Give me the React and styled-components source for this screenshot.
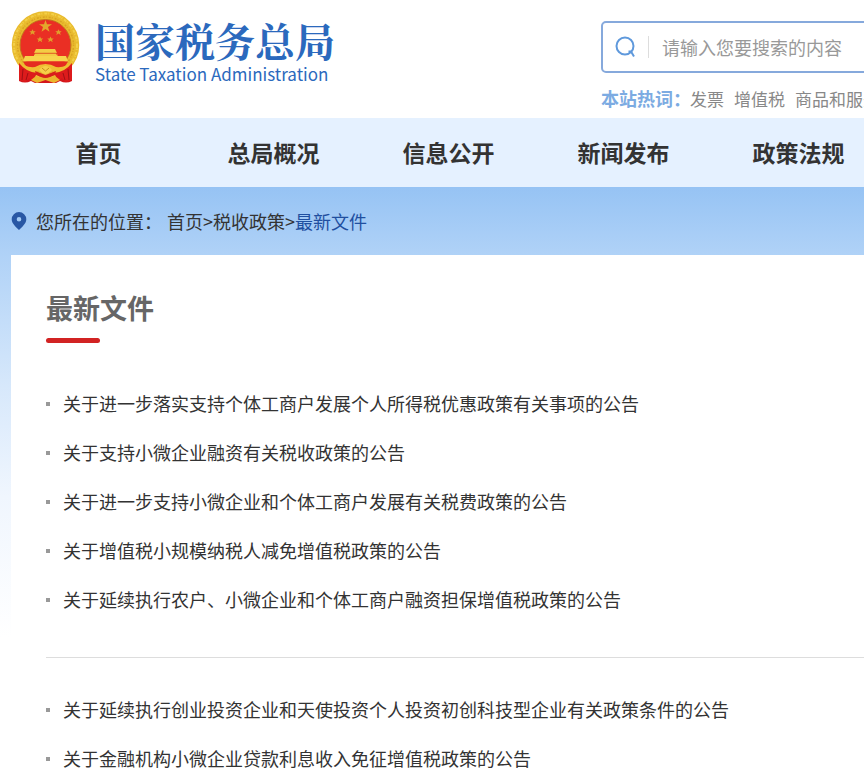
import React from 'react';
import styled, { createGlobalStyle } from 'styled-components';

const navItems = ['首页', '总局概况', '信息公开', '新闻发布', '政策法规'];

const hotWords = ['发票', '增值税', '商品和服务'];

const documentGroups = [
  [
    '关于进一步落实支持个体工商户发展个人所得税优惠政策有关事项的公告',
    '关于支持小微企业融资有关税收政策的公告',
    '关于进一步支持小微企业和个体工商户发展有关税费政策的公告',
    '关于增值税小规模纳税人减免增值税政策的公告',
    '关于延续执行农户、小微企业和个体工商户融资担保增值税政策的公告',
  ],
  [
    '关于延续执行创业投资企业和天使投资个人投资初创科技型企业有关政策条件的公告',
    '关于金融机构小微企业贷款利息收入免征增值税政策的公告',
  ],
];

const Emblem = () => (
  <EmblemSvg viewBox="0 0 69 74" role="img" aria-label="国徽">
    <path d="M9 50 L8 70 Q14 73 20 70 L24 72 H45 L49 70 Q55 73 61 70 L60 50 Z" fill="#d4161b" />
    <circle cx="34.5" cy="34" r="29.5" fill="#ea2f24" stroke="#e9bb2e" strokeWidth="8.5" />
    <circle cx="34.5" cy="34" r="31.5" fill="none" stroke="#f3d04a" strokeWidth="2" strokeDasharray="3 1 1 2" />
    <circle cx="34.5" cy="34" r="28" fill="none" stroke="#d9a324" strokeWidth="1.5" strokeDasharray="1 2 2 1" />
    <circle cx="34.5" cy="34" r="25.5" fill="none" stroke="#b9671b" strokeWidth="0.8" />
    <path d="M34.5 9 L36 13.3 H41 L37 16 L38.5 20.8 L34.5 17.9 L30.5 20.8 L32 16 L28 13.3 H33 Z" fill="#e3a82c" />
    <g fill="#e0a02b">
      <path d="M21.5 18.2 l1 2 h2.2 l-1.7 1.5 .7 2.3 -2.2 -1.4 -2.2 1.4 .7 -2.3 -1.7 -1.5 h2.2z" />
      <path d="M47.5 18.2 l1 2 h2.2 l-1.7 1.5 .7 2.3 -2.2 -1.4 -2.2 1.4 .7 -2.3 -1.7 -1.5 h2.2z" />
      <path d="M29 25.4 l1 2 h2.2 l-1.7 1.5 .7 2.3 -2.2 -1.4 -2.2 1.4 .7 -2.3 -1.7 -1.5 h2.2z" />
      <path d="M39.5 25.4 l1 2 h2.2 l-1.7 1.5 .7 2.3 -2.2 -1.4 -2.2 1.4 .7 -2.3 -1.7 -1.5 h2.2z" />
    </g>
    <path d="M25 38 H44 L46 42 H23 Z M24 42.5 H45 V43.5 H24 Z M23 43.5 H46.5 V45 H23 Z" fill="#f3cc45" />
    <path d="M23 42.2 H46" stroke="#d9641f" strokeWidth="0.7" />
    <path d="M14 45 H55 L57 50.5 H12 Z" fill="#f7d44d" />
    <path d="M12 50.5 H57 Q53 59 44 60 L34.5 52 L25 60 Q16 59 12 50.5 Z" fill="#e52c20" />
    <path d="M7 50 Q14 57 24 56 Q29 53 34.5 53 Q40 53 45 56 Q55 57 62 50 L61 54 Q54 61 45 61 L38 59 H31 L24 61 Q15 61 8 54 Z" fill="#efbf32" />
    <path d="M8 52 Q15 61 26 62 L22 70 L18 67 L14 71 L8 69 Z M61 52 Q54 61 43 62 L47 70 L51 67 L55 71 L61 69 Z" fill="#dd1b1c" />
    <path d="M12 58 L11 69 M17 62 L15 69 M57 58 L58 69 M52 62 L54 69" stroke="#9f1014" strokeWidth="1" />
    <path d="M24 60 L34.5 64 L45 60 L44 64 L34.5 68 L25 64 Z" fill="#d8201c" />
    <path d="M28 59 Q34.5 51 41 59 L38 62 Q34.5 64 31 62 Z" fill="#f6cf48" />
    <path d="M31 57 L34.5 60 L38 57" fill="none" stroke="#c98a1c" strokeWidth="1" />
    <path d="M20 69 L25 65 Q34.5 69 44 65 L49 69 L43 72 L34.5 69 L26 72 Z" fill="#ebb52d" />
  </EmblemSvg>
);

const SearchIcon = () => (
  <svg width="22" height="24" viewBox="0 0 22 24" fill="none" stroke="#5f99dc" strokeWidth="2" aria-hidden="true">
    <circle cx="10" cy="11" r="8.5" />
    <path d="M13.5 16.5 H16 L19 21.5" />
  </svg>
);

const PinIcon = () => (
  <svg width="16" height="20" viewBox="0 0 16 20" aria-hidden="true">
    <path
      fillRule="evenodd"
      fill="#2857a4"
      d="M8 1 A7.3 7.3 0 0 0 .7 8.3 C.7 12.5 4.5 15.5 8 19 C11.5 15.5 15.3 12.5 15.3 8.3 A7.3 7.3 0 0 0 8 1 Z M8 6 A2.3 2.3 0 1 1 8 10.6 A2.3 2.3 0 0 1 8 6 Z"
    />
  </svg>
);

const App = () => {
  return (
    <>
      <GlobalStyle />
      <Page>
        <Header>
          <Brand href="#">
            <Emblem />
            <BrandText>
              <BrandName>国家税务总局</BrandName>
              <BrandEnglish>State Taxation Administration</BrandEnglish>
            </BrandText>
          </Brand>
          <SearchArea>
            <SearchForm role="search">
              <SearchButton type="submit" aria-label="搜索">
                <SearchIcon />
              </SearchButton>
              <SearchInput type="text" aria-label="搜索内容" placeholder="请输入您要搜索的内容" />
            </SearchForm>
            <HotWords>
              <strong>本站热词：</strong>
              {hotWords.map((word) => (
                <a href="#" key={word}>{word}</a>
              ))}
            </HotWords>
          </SearchArea>
        </Header>

        <Nav>
          {navItems.map((item) => (
            <NavLink href="#" key={item}>{item}</NavLink>
          ))}
        </Nav>

        <Main>
          <Breadcrumb>
            <PinIcon />
            <BreadcrumbLabel>您所在的位置：</BreadcrumbLabel>
            <BreadcrumbPath>
              <a href="#">首页</a>&gt;<a href="#">税收政策</a>&gt;<CurrentLink href="#">最新文件</CurrentLink>
            </BreadcrumbPath>
          </Breadcrumb>
          <Panel>
            <PanelTitle>最新文件</PanelTitle>
            {documentGroups.map((group) => (
              <DocumentList key={group[0]}>
                {group.map((title) => (
                  <DocumentItem key={title}>
                    <a href="#">{title}</a>
                  </DocumentItem>
                ))}
              </DocumentList>
            ))}
          </Panel>
        </Main>
      </Page>
    </>
  );
};

export default App;

const GlobalStyle = createGlobalStyle`
  * {
    box-sizing: border-box;
  }

  body {
    margin: 0;
    background-color: #fff;
    color: #333;
    font-family: "Noto Sans CJK SC", sans-serif;
    font-size: 18px;
    overflow-x: hidden;
  }

  a {
    color: inherit;
    text-decoration: none;
  }
`;

const Page = styled.div`
  overflow: hidden;
`;

const Header = styled.header`
  display: grid;
  grid-template-columns: 590px minmax(600px, 1fr);
  height: 118px;
  padding: 0 11px;
`;

const Brand = styled.a`
  display: flex;
  align-items: flex-start;
  gap: 15px;
  padding-top: 11px;
  color: #2b69bd;
`;

const EmblemSvg = styled.svg`
  width: 69px;
  height: 74px;
`;

const BrandText = styled.div`
  display: flex;
  flex-direction: column;
  padding-top: 7px;
`;

const BrandName = styled.span`
  font-family: "Noto Serif CJK SC", "Noto Sans CJK SC", serif;
  font-size: 40px;
  font-weight: 700;
  line-height: 44px;
`;

const BrandEnglish = styled.span`
  font-size: 17px;
  line-height: 24px;
`;

const SearchArea = styled.div`
  padding-top: 21px;
`;

const SearchForm = styled.form`
  display: flex;
  align-items: center;
  height: 52px;
  border: 2px solid #86a9dc;
  border-radius: 5px;
`;

const SearchButton = styled.button`
  display: flex;
  align-items: center;
  height: 22px;
  padding: 0 11px 0 12px;
  border: 0;
  border-right: 1px solid #ddd;
  background: none;
`;

const SearchInput = styled.input`
  flex: 1;
  height: 100%;
  padding: 0 13px;
  border: 0;
  outline: 0;
  background: none;
  font-family: inherit;
  font-size: 18px;

  &::placeholder {
    color: #999;
  }
`;

const HotWords = styled.div`
  display: flex;
  align-items: center;
  gap: 10px;
  height: 50px;
  color: #888;
  font-size: 17px;

  strong {
    margin-right: -11px;
    color: #7cabe2;
    font-size: 18px;
  }
`;

const Nav = styled.nav`
  display: flex;
  padding: 0 11px;
  background-color: #e5f1ff;
`;

const NavLink = styled.a`
  flex: none;
  width: 175px;
  line-height: 69px;
  font-size: 23px;
  font-weight: 700;
  text-align: center;
`;

const Main = styled.main`
  padding-left: 11px;
  background: linear-gradient(#96c3f4 0, #b0d2f7 68px, #d7e8fb 200px, #f0f6fe 310px, #fff 450px);
`;

const Breadcrumb = styled.div`
  display: flex;
  align-items: center;
  height: 68px;
`;

const BreadcrumbLabel = styled.span`
  margin: 0 5px 0 9px;
`;

const BreadcrumbPath = styled.nav`
  display: flex;
`;

const CurrentLink = styled.a`
  color: #1f4fa0;
`;

const Panel = styled.section`
  padding: 32px 0 32px 35px;
  background-color: #fff;
`;

const PanelTitle = styled.h1`
  margin: 0 0 36px;
  color: #666;
  font-size: 27px;
  line-height: 42px;

  &::after {
    content: "";
    display: block;
    width: 54px;
    height: 5px;
    margin-top: 9px;
    border-radius: 3px;
    background-color: #d22323;
  }
`;

const DocumentList = styled.ul`
  margin: 0;
  padding: 0;
  list-style: none;

  & + & {
    margin-top: 33px;
    padding-top: 27px;
    border-top: 1px solid #ddd;
  }
`;

const DocumentItem = styled.li`
  display: flex;
  align-items: center;
  gap: 13px;
  height: 49px;

  &::before {
    content: "";
    width: 4px;
    height: 4px;
    background-color: #999;
  }

  a {
    padding-bottom: 2px;
  }
`;
